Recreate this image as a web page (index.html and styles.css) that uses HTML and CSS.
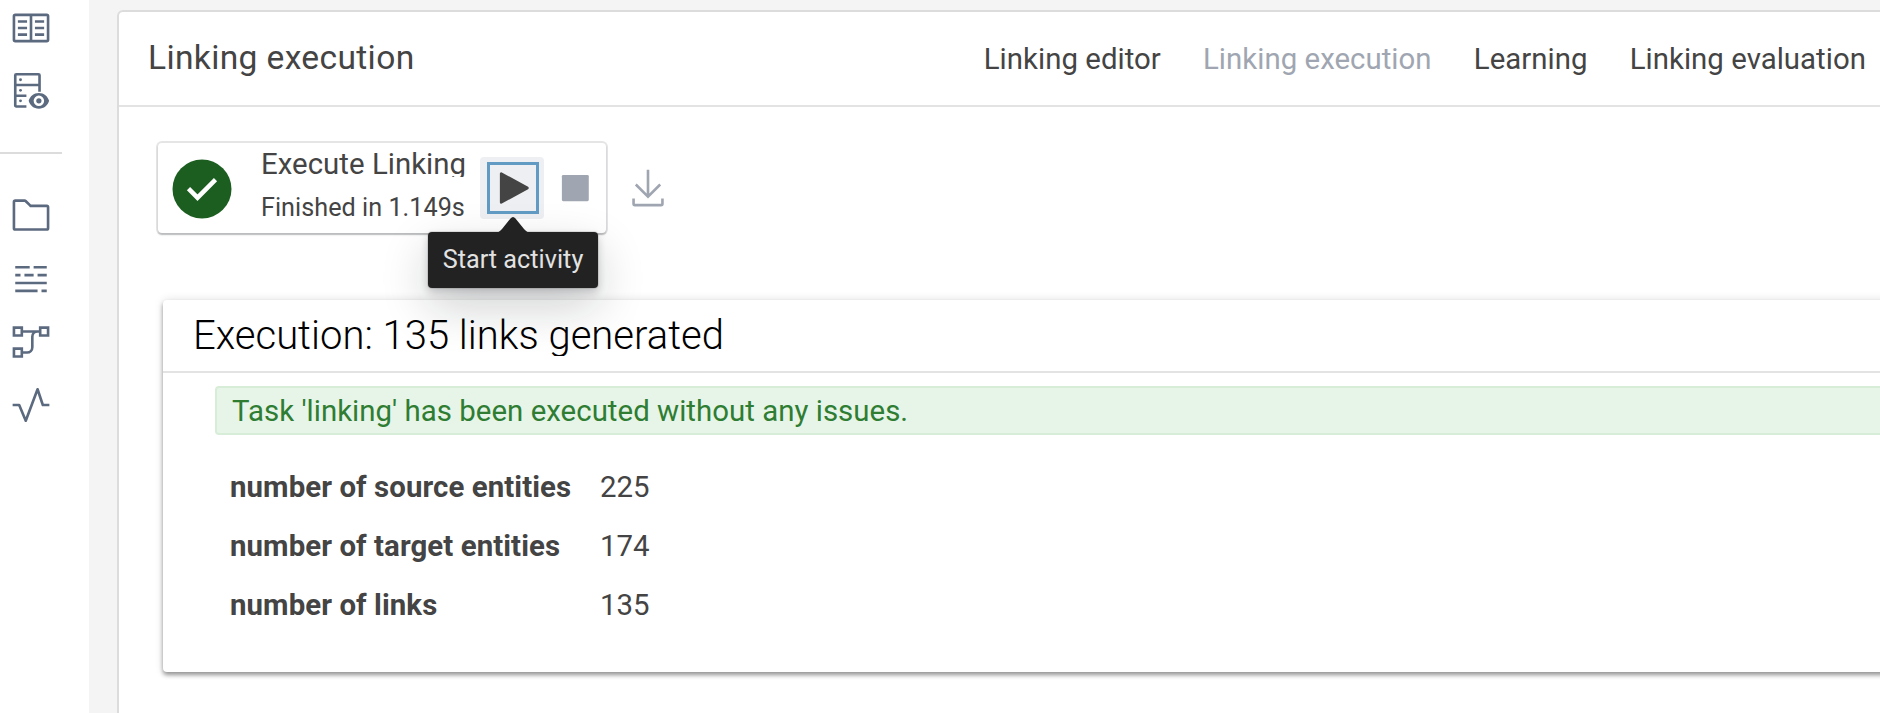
FILE: index.html
```html
<!DOCTYPE html>
<html lang="en">
<head>
<meta charset="utf-8">
<title>Linking execution</title>
<link rel="stylesheet" href="styles.css">
</head>
<body>
<div class="app">
  <nav class="sidebar">
    <div class="group">
      <svg class="icon" viewBox="0 0 32 32"><path d="M28 5H4a2 2 0 0 0-2 2v18a2 2 0 0 0 2 2h24a2 2 0 0 0 2-2V7a2 2 0 0 0-2-2ZM4 7h11v18H4Zm13 18V7h11v18ZM6 10h7v2H6Zm0 5h7v2H6Zm0 5h7v2H6Zm13-10h7v2h-7Zm0 5h7v2h-7Zm0 5h7v2h-7Z" fill-rule="evenodd"/></svg>
      <svg class="icon" viewBox="0 0 32 32"><path class="line" d="M22.5 16.500V4a.8.8 0 0 0-.8-.8H4.800A.8.8 0 0 0 4 4v23a.8.8 0 0 0 .8.8H12.500M4 11.400h18.500M4 19.600h8.500"/><circle cx="8" cy="7.400" r="1.100"/><circle cx="8" cy="15.500" r="1.100"/><circle cx="8" cy="23.500" r="1.100"/><path fill-rule="evenodd" d="M22 17.500c-4 0-6.700 2.400-7.800 6 1.100 3.600 3.800 6 7.800 6s6.700-2.400 7.800-6c-1.100-3.600-3.800-6-7.800-6Zm0 2a4 4 0 1 1 0 8 4 4 0 0 1 0-8Z"/><circle cx="22" cy="23.500" r="2"/></svg>
    </div>
    <div class="divider"></div>
    <div class="group group-lower">
      <svg class="icon" viewBox="0 0 32 32"><path d="m11.170 6 3.420 3.410.58.59H28v16H4V6h7.170m0-2H4a2 2 0 0 0-2 2v20a2 2 0 0 0 2 2h24a2 2 0 0 0 2-2V10a2 2 0 0 0-2-2H16l-3.410-3.410A2 2 0 0 0 11.170 4Z"/></svg>
      <svg class="icon" viewBox="0 0 32 32"><path class="line" d="M4 7h11M18 7h10M4 13h4M11 13h7M21 13h7M4 19h24M4 25h17M24 25h4"/></svg>
      <svg class="icon" viewBox="0 0 32 32"><path class="line" d="M3 5h6v6H3ZM23 5h6v6h-6ZM3 21h6v6H3ZM10 8h12M10 24h3a4 4 0 0 0 4-4v-8a4 4 0 0 1 4-4"/></svg>
      <svg class="icon" viewBox="0 0 32 32"><path class="line" stroke-linejoin="round" d="M2 16h5l5 12 9-24 4 12h5"/></svg>
    </div>
  </nav>
  <main class="main">
    <section class="frame">
      <header class="frame-header">
        <h1 class="title">Linking execution</h1>
        <div class="tabs">
          <span class="tab">Linking editor</span>
          <span class="tab tab-current">Linking execution</span>
          <span class="tab">Learning</span>
          <span class="tab">Linking evaluation</span>
        </div>
      </header>
      <div class="toolbar">
        <div class="activity">
          <svg class="status" viewBox="0 0 60 60"><circle cx="30" cy="30" r="29.500" fill="#1b5e20"/><path d="m16.500 29.700 9 9 18-18" fill="none" stroke="#fff" stroke-width="4.500"/></svg>
          <div class="activity-text">
            <div class="activity-name">Execute Linking</div>
            <div class="activity-state">Finished in 1.149s</div>
          </div>
          <div class="button button-active">
            <div class="focus"><svg class="icon play" viewBox="0 0 32 32"><path d="M7 28a1 1 0 0 1-1-1V5a1 1 0 0 1 1.482-.876l20 11a1 1 0 0 1 0 1.752l-20 11A1 1 0 0 1 7 28Z"/></svg></div>
            <div class="tooltip">
              <svg class="arrow" viewBox="0 0 36 16"><path d="M0 16c3 0 5-2 7-4L15.500 1.500q2.500-3 5 0L29 12c2 2 4 4 7 4Z"/></svg>
              Start activity
            </div>
          </div>
          <div class="button"><svg class="icon muted" viewBox="0 0 32 32"><rect x="6" y="6" width="20.500" height="20" rx="1"/></svg></div>
        </div>
        <div class="button download"><svg class="icon muted" viewBox="0 0 32 32"><path d="M26 24v4H6v-4H4v4a2 2 0 0 0 2 2h20a2 2 0 0 0 2-2v-4ZM26 14l-1.410-1.410L17 20.170V2h-2v18.170l-7.590-7.580L6 14l10 10Z"/></svg></div>
      </div>
      <section class="card">
        <h2 class="card-title"><span>Execution: 135 links generated</span></h2>
        <div class="notice">Task 'linking' has been executed without any issues.</div>
        <dl class="stats">
          <dt>number of source entities</dt><dd>225</dd>
          <dt>number of target entities</dt><dd>174</dd>
          <dt>number of links</dt><dd>135</dd>
        </dl>
      </section>
    </section>
  </main>
</div>
</body>
</html>
```
FILE: styles.css
```css
* { box-sizing: border-box; }
body {
  margin: 0;
  overflow: hidden;
  background: #fff;
  color: #444;
  font: 29.400px/38px Roboto, sans-serif;
  letter-spacing: .03px;
}
h1, h2, dl, dd { margin: 0; font-weight: 400; }
.app { display: flex; height: 713px; overflow: hidden; }

.sidebar { flex: none; width: 89px; padding-top: 7px; }
.group { display: flex; flex-direction: column; gap: 21px; padding-left: 10px; }
.group-lower { gap: 21.300px; }
.divider { width: 62px; height: 2px; margin: 40px 0 40.400px; background: #dcdcdc; }
.icon { display: block; flex: none; width: 42px; height: 42px; fill: #5c6a80; }
.line { fill: none; stroke: #5c6a80; stroke-width: 2; }

.main { flex: 1; min-width: 0; padding: 10px 0 0 28px; background: #f4f4f4; }
.frame {
  width: 1800px;
  height: 740px;
  background: #fff;
  border: 2px solid #dcdcdc;
  border-radius: 6px;
}
.frame-header {
  display: flex;
  align-items: center;
  justify-content: space-between;
  width: 1761px;
  height: 95px;
  padding: 0 14px 1px 29px;
  border-bottom: 2px solid #e3e3e3;
}
.title { font-size: 33.600px; line-height: 44px; letter-spacing: .35px; white-space: nowrap; }
.tabs { display: flex; gap: 42.200px; padding-top: 1px; white-space: nowrap; }
.tab-current { color: #a0a6b1; }

.toolbar { display: flex; align-items: center; margin: 36px 0 0 39px; }
.activity {
  display: flex;
  align-items: center;
  width: 448px;
  height: 90px;
  padding-left: 14px;
  border-radius: 4px;
  box-shadow: 0 0 0 2px rgba(17, 20, 24, .11), 0 2px 2px rgba(17, 20, 24, .2);
}
.status { flex: none; width: 60px; height: 60px; margin-top: 1px; }
.activity-text { flex: none; width: 240px; height: 90px; padding-left: 29px; white-space: nowrap; }
.activity-name { height: 34px; line-height: 42px; overflow: hidden; }
.activity-state { margin-top: 13px; font-size: 25.200px; line-height: 36px; }
.button {
  position: relative;
  display: flex;
  align-items: center;
  justify-content: center;
  flex: none;
  width: 63px;
  height: 62px;
  border-radius: 4px;
}
.button-active { width: 64px; margin-left: 8px; background: #edeff2; }
.button-active + .button { margin-left: -1px; }
.focus {
  display: flex;
  align-items: center;
  justify-content: center;
  width: 52px;
  height: 52px;
  margin-left: 1px;
  border: 3px solid #619bc3;
}
.play { fill: #444; }
.muted { fill: #a0a6b1; }
.download { margin-left: 10px; }
.tooltip {
  position: absolute;
  z-index: 2;
  top: 75px;
  left: -52px;
  width: 170px;
  height: 56px;
  border-radius: 4px;
  background: #222;
  color: #e2e2e2;
  font-size: 25.200px;
  line-height: 56px;
  text-align: center;
  white-space: nowrap;
  box-shadow: 0 0 0 1px rgba(17, 20, 24, .1), 0 4px 8px rgba(17, 20, 24, .2), 0 18px 48px rgba(17, 20, 24, .2);
}
.arrow { position: absolute; top: -15px; left: 67px; width: 36px; height: 16px; fill: #222; }

.card {
  width: 1780px;
  height: 372px;
  margin: 67px 0 0 44px;
  border-radius: 4px;
  background: #fff;
  box-shadow: 0 0 10px rgba(0, 0, 0, .12), 0 3px 4px rgba(0, 0, 0, .38);
}
.card-title {
  height: 73px;
  padding: 17px 30px 0;
  border-bottom: 2px solid #e3e3e3;
  color: #000;
  font-size: 40px;
  font-weight: 300;
  letter-spacing: 0;
}
.card-title span { display: block; height: 39px; line-height: 37px; overflow: hidden; }
.notice {
  height: 49px;
  margin: 13px 0 0 52px;
  padding: 4px 15px;
  border: 2px solid #d7edd8;
  border-radius: 4px;
  background: #e7f4e8;
  color: #2e7d32;
}
.stats {
  display: grid;
  grid-template-columns: 370px 200px;
  grid-auto-rows: 59px;
  align-items: center;
  padding: 22px 0 0 67px;
}
.stats dt { font-weight: 700; letter-spacing: .08px; }
```
